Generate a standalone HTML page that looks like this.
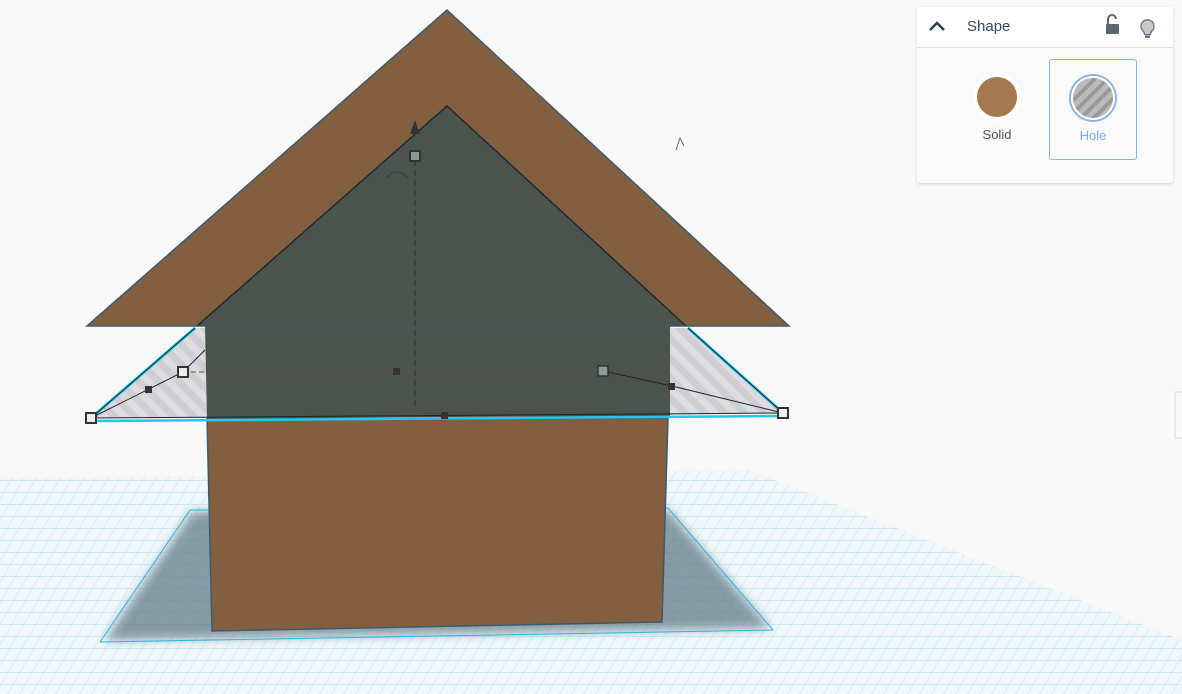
<!DOCTYPE html>
<html><head><style>
body{margin:0;width:1182px;height:694px;overflow:hidden;background:#f8f8f8;font-family:"Liberation Sans",sans-serif;position:relative}
svg{position:absolute;left:0;top:0}
.panel{position:absolute;left:917px;top:7px;width:256px;height:176px;background:#fafafa;border-radius:3px;box-shadow:0 1px 3px rgba(0,0,0,.15)}
.hdr{height:40px;background:#fff;border-bottom:1px solid #e0e0e0;position:relative}
.hdr span{position:absolute;left:50px;top:11px;font-size:15px;color:#3a4a5c}
.opt{position:absolute;top:52px;width:86px;height:100px;text-align:center;font-size:13px}
</style></head><body>
<svg width="1182" height="694">
<defs>
<pattern id="g" width="12" height="12" patternUnits="userSpaceOnUse" patternTransform="skewX(-30)">
<rect width="12" height="12" fill="#f0f7fa"/><path d="M0 0H12M0 0V12" stroke="#b5e0f0" stroke-width="1"/></pattern>
<pattern id="h" width="14" height="14" patternUnits="userSpaceOnUse" patternTransform="rotate(-45)">
<rect width="14" height="14" fill="#cfced3"/><rect width="7" height="14" fill="#dcdbdf"/></pattern>
<filter id="b"><feGaussianBlur stdDeviation="5"/></filter>
</defs>
<polygon points="0,478 750,470 1182,640 1182,694 0,694" fill="url(#g)"/>
<polygon points="105,640 192,512 668,510 770,628" fill="#5a7480" opacity=".7" filter="url(#b)"/>
<polygon points="100,642 190,510 668,508 773,630" fill="none" stroke="#29b6e0" stroke-width="1"/>
<polygon points="207,418 668,418 662,622 212,631" fill="#82603f" stroke="#3d5a70" stroke-width="1.5"/>
<polygon points="447,10 789,326 87,326" fill="#82603f" stroke="#3d5a70" stroke-width="1.5"/>
<polygon points="91,418 195,328 207,328 207,418" fill="url(#h)"/>
<polygon points="670,328 688,328 783,413 670,415" fill="url(#h)"/>
<polygon points="447,106 686,326 670,326 670,416 207,418 205,326 197,326" fill="#4b534c"/>
<path d="M197,326 L447,106 L686,326" fill="none" stroke="#1e2a36" stroke-width="1.5"/>
<line x1="197" y1="326" x2="688" y2="326" stroke="#3d5a70" stroke-width="1"/>
<path d="M91,418 L195,328 M783,413 L688,328" stroke="#1ec8ee" stroke-width="3"/>
<path d="M91,418 L195,328 M783,413 L688,328" stroke="#222" stroke-width="1"/>
<line x1="91" y1="421" x2="783" y2="416" stroke="#1ec8ee" stroke-width="2.5"/>
<line x1="91" y1="418" x2="783" y2="413" stroke="#222" stroke-width="1"/>
<path d="M91,418 L183,372 L205,350 M783,413 L672,386 L603,371" stroke="#222" stroke-width="1" fill="none"/>
<path d="M183,372 L603,371" stroke="#6b4a3a" stroke-dasharray="5,3" fill="none"/>
<line x1="415" y1="160" x2="415" y2="410" stroke="#333" stroke-dasharray="6,4"/>
<polygon points="415,120 410,134 420,134" fill="#333"/>
<path d="M386,178 Q397,166 408,178" stroke="#3a4448" fill="none" stroke-width="1.5"/>
<rect x="410" y="151" width="10" height="10" fill="#8a9a9a" stroke="#333" stroke-width="2"/>
<rect x="145" y="386" width="7" height="7" fill="#333"/><rect x="668" y="383" width="7" height="7" fill="#333"/>
<rect x="393" y="368" width="7" height="7" fill="#333"/><rect x="441" y="412" width="7" height="7" fill="#333"/>
<rect x="598" y="366" width="10" height="10" fill="#8a9a9a" stroke="#333" stroke-width="1.5"/>
<rect x="178" y="367" width="10" height="10" fill="#eee" stroke="#333" stroke-width="2"/>
<rect x="86" y="413" width="10" height="10" fill="#eee" stroke="#333" stroke-width="2"/>
<rect x="778" y="408" width="10" height="10" fill="#eee" stroke="#333" stroke-width="2"/>
<path d="M676,150 L680,138 L684,146" stroke="#666" fill="none"/>
<rect x="1175" y="392" width="10" height="46" fill="#f8f8f8" stroke="#ddd"/>
</svg>
<div class="panel">
<div class="hdr">
<svg width="256" height="40" style="position:relative"><path d="M13 23 L20 16 L27 23" stroke="#2e3f52" stroke-width="2.5" fill="none"/>
<rect x="189" y="17" width="13" height="10" rx="1" fill="#5b6770"/><path d="M191 17 V12 a4 4 0 0 1 8 0" stroke="#5b6770" stroke-width="2" fill="none"/>
<path d="M226 24 a6.5 6.5 0 1 1 9 0 q-1.5 1.5 -1.5 3.5 h-6 q0 -2 -1.5 -3.5z" fill="#c5cace" stroke="#6b747c" stroke-width="1.3"/><rect x="228" y="28.5" width="5" height="2.5" fill="#6b747c"/></svg>
<span>Shape</span></div>
<div class="opt" style="left:37px"><div style="width:40px;height:40px;border-radius:50%;background:#a5784e;border:4px solid #fff;margin:14px auto 6px"></div><div style="color:#555">Solid</div></div>
<div class="opt" style="left:132px;border:1px solid #8ab4e8;border-radius:3px;width:86px;height:99px"><div style="width:40px;height:40px;border-radius:50%;background:repeating-linear-gradient(135deg,#bbb 0 5px,#999 5px 9px);border:2px solid #fff;box-shadow:0 0 0 2px #8ab4e8;margin:16px auto 8px"></div><div style="color:#7fa9e0">Hole</div></div>
</div>
</body></html>
